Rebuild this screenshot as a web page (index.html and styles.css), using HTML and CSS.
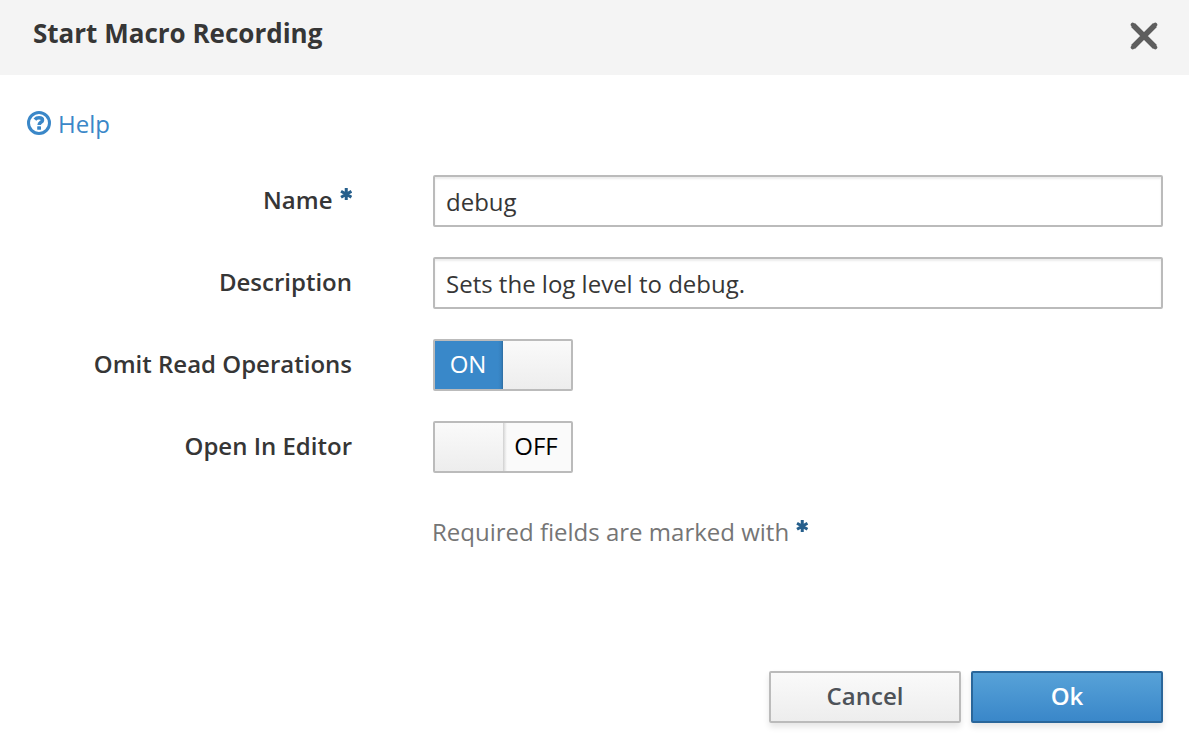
FILE: index.html
```html
<!DOCTYPE html>
<html lang="en">
<head>
<meta charset="utf-8">
<title>Start Macro Recording</title>
<link rel="stylesheet" href="styles.css">
</head>
<body>
<svg class="defs" width="0" height="0" aria-hidden="true">
  <symbol id="asterisk" viewBox="0 0 12 12">
    <path d="M6 0V12M1 3.1L11 8.9M11 3.1L1 8.9" fill="none" stroke="currentColor" stroke-width="2.9" stroke-linecap="butt"/>
  </symbol>
</svg>
<div class="modal">
  <header class="modal-header">
    <h4 class="modal-title">Start Macro Recording</h4>
    <button class="close" type="button" aria-label="Close">
      <svg width="28" height="28" viewBox="0 0 28 28"><path d="M3 3L25 25M25 3L3 25" fill="none" stroke="currentColor" stroke-width="5.4"/><path d="M2.7 2.7L25.3 25.3M25.3 2.7L2.7 25.3" fill="none" stroke="currentColor" stroke-width="4" stroke-linecap="round"/></svg>
    </button>
  </header>
  <main class="modal-body">
    <a class="help">
      <svg class="help-icon" width="24" height="24" viewBox="0 0 24 24"><circle cx="12" cy="12" r="10.5" fill="none" stroke="currentColor" stroke-width="3"/><path d="M7.9 8.6C9 7.2 10.3 6.8 12 6.8C14.2 6.8 15.5 7.7 15.5 9.2C15.5 11.5 12.1 11.2 12.1 14" fill="none" stroke="currentColor" stroke-width="3.5"/><rect x="10.2" y="15.2" width="3.8" height="3.6" rx=".5" fill="currentColor"/></svg>
      <span>Help</span>
    </a>
    <form class="form">
      <label class="label" for="name">Name<svg class="required"><use href="#asterisk"/></svg></label>
      <input class="control" id="name" type="text" value="debug">
      <label class="label" for="description">Description</label>
      <input class="control" id="description" type="text" value="Sets the log level to debug.">
      <span class="label">Omit Read Operations</span>
      <div class="switch"><span class="switch-on">ON</span><span class="switch-handle"></span></div>
      <span class="label">Open In Editor</span>
      <div class="switch"><span class="switch-handle"></span><span class="switch-off">OFF</span></div>
    </form>
    <p class="note">Required fields are marked with<svg class="required"><use href="#asterisk"/></svg></p>
  </main>
  <footer class="modal-footer">
    <button class="btn" type="button">Cancel</button>
    <button class="btn btn-primary" type="button">Ok</button>
  </footer>
</div>
</body>
</html>
```
FILE: styles.css
```css
* { box-sizing: border-box; }

body {
  margin: 0;
  background: #fff;
  color: #363636;
  font: 24px/40px "Open Sans", sans-serif;
}

.defs { position: absolute; }

.modal {
  display: flex;
  flex-direction: column;
  height: 749px;
  overflow: hidden;
}

.modal-header {
  display: flex;
  justify-content: space-between;
  height: 75px;
  padding: 13px 31px 0 33px;
  background: #f4f4f4;
}

.modal-title { margin: 0; font-size: 26px; font-weight: 700; }

.close {
  height: 28px;
  margin: 8.5px 0 0;
  padding: 0;
  border: 0;
  background: none;
  color: #5e5e5e;
}

.close svg { display: block; }

.modal-body { flex: 1; padding: 29px 26px 0 27px; }

.help { display: flex; gap: 7px; width: max-content; color: #3a87c8; }
.help-icon { margin-top: 7px; }

.form {
  display: grid;
  grid-template-columns: 325px 730px;
  grid-auto-rows: 52px;
  gap: 30px 81px;
  margin-top: 31px;
}

.label { padding-top: 5px; text-align: right; font-weight: 600; }

.required {
  width: 12.5px;
  height: 12.5px;
  margin-left: 7px;
  color: #265f8c;
  vertical-align: 9px;
}

.control {
  width: 100%;
  height: 52px;
  padding: 0 11px;
  border: 2px solid #bbb;
  border-radius: 2px;
  box-shadow: inset 0 2px 2px rgba(3, 3, 3, .075);
  background: #fff;
  color: #363636;
  font: inherit;
}

.switch {
  display: flex;
  width: 140px;
  height: 52px;
  border: 2px solid #bbb;
  border-radius: 2px;
  overflow: hidden;
  text-align: center;
}

.switch-handle { width: 68px; background: linear-gradient(#fafafa, #ededed); }

.switch-on,
.switch-off { width: 68px; padding: 3px 2px 0 0; }

.switch-on {
  background: linear-gradient(to left, #2d6ca0, #3681bf 2px, #3988c9 5px);
  color: #fff;
}

.switch-off {
  background: linear-gradient(to right, #cfcfcf, #e8e8e8 2px, #fafafa 4px);
  color: #000;
}

.note { margin: 39px 0 0 405px; color: #757575; }

.modal-footer {
  display: flex;
  justify-content: flex-end;
  gap: 10px;
  padding: 0 26px 26px;
}

.btn {
  width: 192px;
  height: 52px;
  padding: 0 0 3px;
  border: 2px solid #bbb;
  border-radius: 2px;
  box-shadow: 0 4px 6px rgba(3, 3, 3, .1);
  background: linear-gradient(#fafafa, #ededed);
  color: #4d5258;
  font: 600 24px/40px "Open Sans", sans-serif;
}

.btn-primary {
  border-color: #2a669a;
  background: linear-gradient(#57a2d8, #3a87c9);
  color: #fff;
}
```
